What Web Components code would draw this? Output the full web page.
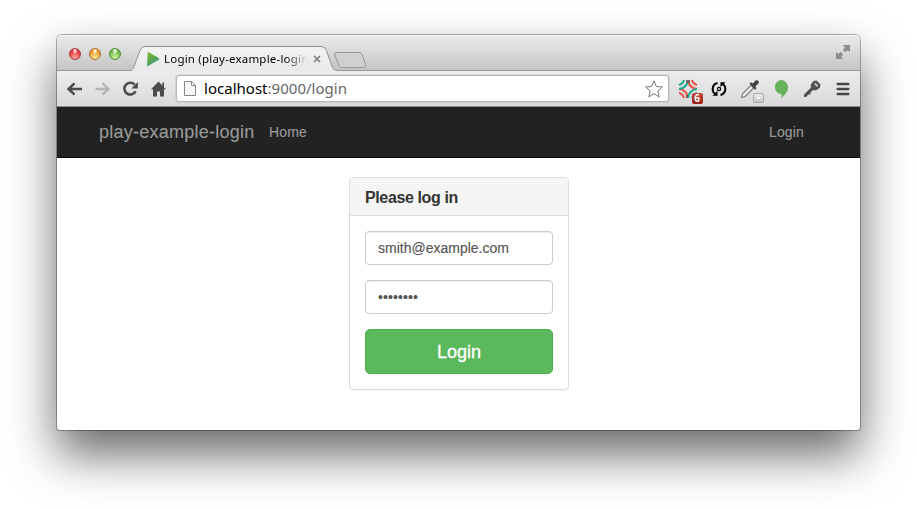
<!DOCTYPE html>
<html lang="en">
<head>
<meta charset="utf-8">
<title>Login (play-example-login)</title>
<style>
html,body{margin:0;width:917px;height:509px;overflow:hidden;background:#fff;font-family:"Liberation Sans",Arial,sans-serif}
body{box-sizing:border-box;padding:35px 57px}
</style>
</head>
<body>
<browser-window>
  <tab-strip slot="tabs"><browser-tab>Login (play-example-login)</browser-tab></tab-strip>
  <tool-bar slot="toolbar"><span slot="host">localhost</span><span slot="path">:9000/login</span></tool-bar>
  <nav-bar><span slot="brand">play-example-login</span><span slot="left">Home</span><span slot="right">Login</span></nav-bar>
  <login-panel heading="Please log in">
    <form-field>smith@example.com</form-field>
    <form-field class="password" secret>••••••••</form-field>
    <submit-button>Login</submit-button>
  </login-panel>
</browser-window>
<script>
function define(name, html) {
  customElements.define(name, class extends HTMLElement {
    constructor() {
      super();
      this.attachShadow({mode: 'open'}).innerHTML = html;
    }
    connectedCallback() {
      const h = this.shadowRoot.querySelector('[data-heading]');
      if (h) h.textContent = this.getAttribute('heading');
    }
  });
}

define('browser-window', `
<style>
:host{display:flex;flex-direction:column;width:803px;height:395px;background:#fff;border-radius:5px 5px 3px 3px;
 box-shadow:0 0 0 1px rgba(0,0,0,.3),0 24px 48px rgba(0,0,0,.6)}
</style>
<slot name="tabs"></slot><slot name="toolbar"></slot><slot></slot>`);

define('tab-strip', `
<style>
:host{display:flex;align-items:flex-end;box-sizing:border-box;height:36px;padding-left:73px;border-radius:5px 5px 0 0;
 background:linear-gradient(#e9e9e9,#dedede 35%,#c3c3c3);box-shadow:inset 0 1px #f7f7f7,inset 0 -1px #979797}
.new{margin:0 0 2px -4px}
.full{margin:0 9px 11px auto}
.lights{display:flex;gap:8px;margin:0 9px 11px -61px}
i{display:block;box-sizing:border-box;width:12px;height:12px;border-radius:50%;border:1px solid}
.r{border-color:#a43c3a;background:radial-gradient(ellipse at 50% 18%,#fff 0,#ffc0c0 14%,transparent 32%),radial-gradient(circle at 50% 85%,#ffaaa4,#e2383c 65%)}
.y{border-color:#a96b28;background:radial-gradient(ellipse at 50% 18%,#fff 0,#ffe8bc 14%,transparent 32%),radial-gradient(circle at 50% 85%,#ffec94,#e99a30 65%)}
.g{border-color:#4f8a38;background:radial-gradient(ellipse at 50% 18%,#fff 0,#e0f8d0 14%,transparent 32%),radial-gradient(circle at 50% 85%,#d3f8a5,#6fb751 65%)}
svg{display:block}
</style>
<div class="lights"><i class="r"></i><i class="y"></i><i class="g"></i></div>
<slot></slot>
<svg class="new" width="34" height="18" viewBox="0 0 34 18"><path d="M3.5 1.5H26Q28 1.5 29 3.5L32.5 13.500Q33.200 16.500 30.500 16.500H9Q7 16.500 6 14.500L1.700 4Q.8 1.500 3.500 1.500Z" fill="#d0d0d0" stroke="#979797"/></svg>
<svg class="full" width="16" height="16" viewBox="0 0 16 16"><g fill="#8d8d8d"><path d="M8 1H15V8L12.600 6.200 10.300 8.300 7.700 5.700 9.900 3.400Z"/><path d="M1 8V15H8L6.100 12.600 8.300 10.400 5.600 7.700 3.400 9.900Z"/></g></svg>`);

define('browser-tab', `
<style>
:host{display:grid;width:207px;height:25px;font:11.5px/24px "Noto Sans","Open Sans",sans-serif;color:#000}
svg,.row{grid-area:1/1}
svg{display:block}
.row{display:flex;align-items:center;padding-left:16px}
.title{width:144px;margin-left:4px;overflow:hidden;white-space:nowrap;letter-spacing:.2px;
 -webkit-mask:linear-gradient(90deg,#000 122px,transparent 144px);mask:linear-gradient(90deg,#000 122px,transparent 144px)}
.x{margin-left:5px}
</style>
<svg width="207" height="25"><defs><linearGradient id="g" x2="0" y2="1"><stop stop-color="#f3f3f3"/><stop offset="1" stop-color="#e9e9e9"/></linearGradient></defs>
<path d="M0 25V24.500C2 24.500 3 23 4 20.500L10 4.500Q11.500 .5 15 .5H191Q195 .5 196.500 4.500L202 20.500Q203.500 24.500 207 24.500V25Z" fill="url(#g)"/>
<path d="M0 24.500C2 24.500 3 23 4 20.500L10 4.500Q11.500 .5 15 .5H191Q195 .5 196.500 4.500L202 20.500Q203.500 24.500 207 24.500" fill="none" stroke="#919191"/></svg>
<div class="row">
<svg width="14" height="16" viewBox="0 0 14 16"><defs><linearGradient id="p" x2=".6" y2="1"><stop stop-color="#7fb83c"/><stop offset=".55" stop-color="#5da84c"/><stop offset="1" stop-color="#4599a5"/></linearGradient></defs><path d="M2.500 1Q1.700.5 1.700 1.500L1 14.500Q.9 15.700 2 15L13 8.700Q14 8 13 7.300Z" fill="url(#p)"/></svg>
<span class="title"><slot></slot></span>
<svg class="x" width="8" height="8" viewBox="0 0 8 8"><path d="M1 1L7 7M7 1L1 7" stroke="#777" stroke-width="1.500"/></svg>
</div>`);

define('tool-bar', `
<style>
:host{display:flex;align-items:center;box-sizing:border-box;height:36px;padding:0 0 0 8px;
 background:linear-gradient(#ececec,#dadada);border-bottom:1px solid #8b8b8b}
svg{display:block;flex:none}
.nav{display:flex;flex:none;gap:8px}
.url{display:flex;flex:none;align-items:center;box-sizing:border-box;width:493px;height:27px;margin-left:7px;padding:0 5px 0 6px;background:#fff;
 border:1px solid #b7b7b7;border-radius:3px;box-shadow:0 0 0 1px rgba(180,180,180,.3);font:15px/25px "Noto Sans","Open Sans",sans-serif;color:#666}
.addr{margin-left:7px;letter-spacing:.02px;white-space:nowrap}
.host{color:#000}
.star{margin-left:auto}
.ext{display:grid;flex:none;align-items:center;grid-template-columns:repeat(6,31px);margin-left:3px}
.ext>*{justify-self:center}
.wrap{position:relative;width:20px;height:20px}
.badge{position:absolute;right:-5px;bottom:-5px;width:11px;height:11px;border-radius:2px;background:linear-gradient(#c9473c,#9d1d17);color:#fff;font:bold 10px/11px "Noto Sans",sans-serif;text-align:center}
.mini{position:absolute;right:-4px;bottom:-4px;box-sizing:border-box;width:11px;height:10px;border:1px solid #aaa;border-radius:2px;background:linear-gradient(#fff,#fff) 50% 50%/3px 2px no-repeat,linear-gradient(#e9e9e9,#c6c6c6)}
</style>
<div class="nav">
<svg width="20" height="20" viewBox="0 0 20 20" fill="none" stroke="#4c4c4c" stroke-width="2.500"><path d="M17 10H4M9.500 4.300L3.500 10L9.500 15.700"/></svg>
<svg width="20" height="20" viewBox="0 0 20 20" fill="none" stroke="#b5b5b5" stroke-width="2.300"><path d="M2.500 10H15M9.500 4.300L15.500 10L9.500 15.700"/></svg>
<svg width="20" height="20" viewBox="0 0 20 20"><path d="M13.600 5.600A5.900 5.900 0 1 0 14.600 12.200" fill="none" stroke="#4c4c4c" stroke-width="2.500"/><path d="M16.800 3V9.500H10.300Z" fill="#4c4c4c"/></svg>
<svg width="20" height="20" viewBox="0 0 20 20" fill="#4c4c4c"><path d="M9.500 2.500L2 10.300H4V17.500H8V12.500H11V17.500H15V10.300H17L15 8.200V3.500H13.300V6.400Z"/></svg>
</div>
<div class="url">
<svg width="14" height="17" viewBox="0 0 14 17"><path d="M1.500 1.500H8.500L12.500 5.500V15.500H1.500ZM8.500 1.500V5.500H12.500" fill="#f7f7f7" stroke="#888"/></svg>
<span class="addr"><span class="host"><slot name="host"></slot></span><slot name="path"></slot></span>
<svg class="star" width="18" height="18" viewBox="0 0 18 18"><path d="M9 .9L11.300 6.500 17.400 7 12.800 11 14.200 16.900 9 13.700 3.800 16.900 5.200 11 .6 7 6.700 6.500Z" fill="#fff" stroke="#777" stroke-linejoin="round"/></svg>
</div>
<div class="ext">
<div class="wrap"><svg width="20" height="20" viewBox="0 0 20 20" fill="none" stroke-width="2.200">
<g stroke="#e7584c"><path d="M10 1Q11 9 19 10M14 1Q15 5 19 6"/><path d="M1 10Q9 11 10 19M1 14Q5 15 6 19"/></g>
<g stroke="#27aa92"><path d="M10 1Q9 9 1 10M6 1Q5 5 1 6"/><path d="M19 10Q11 11 10 19M19 14Q15 15 14 19"/></g>
<path d="M9 1V4M11 1V4M9 16V19" stroke="#74524a" stroke-width="1.500"/></svg><span class="badge">6</span></div>
<svg width="20" height="20" viewBox="0 0 20 20"><g fill="none" stroke="#000" stroke-width="2"><path d="M8.500 4.100A6.100 6.100 0 0 0 6.200 15"/><path d="M11.500 15.900A6.100 6.100 0 0 0 13.800 5"/></g><path d="M3.500 16.700H8.500V11.800ZM16.500 3.300H11.500V8.200Z"/><circle cx="10" cy="10" r="1.600" fill="none" stroke="#000" stroke-width="1.200"/></svg>
<div class="wrap"><svg width="20" height="20" viewBox="0 0 20 20"><path d="M1.500 18.500L2.500 14.800 11 6.300 13.700 9 5.200 17.500Z" fill="#eee" stroke="#777" stroke-width="1.100"/><path d="M9.500 4.500L11 3.200 13 4.500 15.500 1.500Q17.500.8 18.500 2 19.500 3.500 18 5L15.500 7.300 16.500 9.500 15 10.800Z" fill="#414141"/></svg><span class="mini"></span></div>
<svg width="18" height="20" viewBox="0 0 18 20"><path d="M9 1A7.200 7.200 0 0 1 16 8.200C16 12.800 12.500 16.200 9.500 19V15.300A7.200 7.200 0 0 1 9 1Z" fill="#66b25b"/></svg>
<svg width="20" height="20" viewBox="0 0 20 20"><path d="M11.500 2L14.500 1.500 18.500 5.500 18 8.500 14 11.500 11 11 8.500 13.500V15.500H6.500L4 18H2V15.500L9 8.500 8.500 6Z" fill="#505050"/><path d="M12.800 4.500L15.500 7.200" stroke="#ddd" stroke-width="1.700"/></svg>
<svg width="14" height="14" viewBox="0 0 14 14" stroke="#464646" stroke-width="2.400" stroke-linecap="round"><path d="M1.700 2H12.300M1.700 7H12.300M1.700 12H12.300"/></svg>
</div>`);

define('nav-bar', `
<style>
:host{display:flex;align-items:center;box-sizing:border-box;height:51px;padding:0 56px 0 42px;background:#222;border-bottom:1px solid #080808;color:#999;font-size:14px;letter-spacing:.15px;-webkit-text-stroke:.15px #999}
.brand{font-size:18px;width:170px;white-space:nowrap;letter-spacing:.24px}
.right{margin-left:auto}
</style>
<span class="brand"><slot name="brand"></slot></span><slot name="left"></slot><span class="right"><slot name="right"></slot></span>`);

define('login-panel', `
<style>
:host{display:block;box-sizing:border-box;width:220px;height:213px;margin:19px auto 0 292px;border:1px solid #ddd;border-radius:4px;box-shadow:0 1px 1px rgba(0,0,0,.05)}
header{box-sizing:border-box;height:38px;padding:0 15px;background:#f5f5f5;border-bottom:1px solid #ddd;border-radius:3px 3px 0 0;font:bold 16px/39px "Liberation Sans",Arial,sans-serif;letter-spacing:-.38px;color:#333}
.body{display:flex;flex-direction:column;gap:15px;padding:15px}
</style>
<header data-heading></header><div class="body"><slot></slot></div>`);

define('form-field', `
<style>
:host{display:block;box-sizing:border-box;height:34px;padding:0 12px;border:1px solid #ccc;border-radius:4px;background:#fff;box-shadow:inset 0 1px 1px rgba(0,0,0,.075);font-size:14px;line-height:32px;color:#555;-webkit-text-stroke:.15px #555}
:host([secret]){letter-spacing:.1px}
</style><slot></slot>`);

define('submit-button', `
<style>
:host{display:block;box-sizing:border-box;height:45px;border:1px solid #4cae4c;border-radius:5px;background:#5cb85c;color:#fff;font-size:18px;line-height:44px;text-align:center;-webkit-text-stroke:.3px #fff}
</style><slot></slot>`);
</script>
</body>
</html>
